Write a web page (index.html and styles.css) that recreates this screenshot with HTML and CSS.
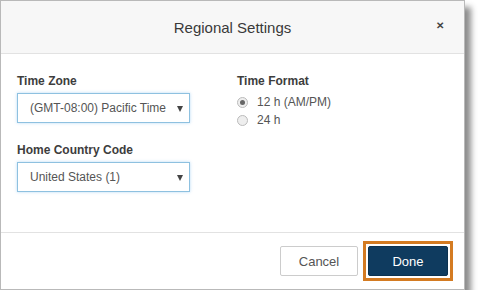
FILE: index.html
```html
<!DOCTYPE html>
<html>
<head>
<meta charset="utf-8">
<link rel="stylesheet" href="styles.css">
</head>
<body>
<div class="dialog">
  <div class="header">
    <span class="title">Regional Settings</span>
    <span class="close">&#x2715;</span>
  </div>
  <div class="content">
    <div class="col left">
      <div class="label">Time Zone</div>
      <div class="select">(GMT-08:00) Pacific Time<span class="arrow"></span></div>
      <div class="label second">Home Country Code</div>
      <div class="select">United States (1)<span class="arrow"></span></div>
    </div>
    <div class="col right">
      <div class="label">Time Format</div>
      <div class="radio-row first"><span class="radio checked"></span>12 h (AM/PM)</div>
      <div class="radio-row"><span class="radio"></span>24 h</div>
    </div>
  </div>
  <div class="footer">
    <button class="btn cancel">Cancel</button>
    <div class="highlight"><button class="btn done">Done</button></div>
  </div>
</div>
</body>
</html>
```
FILE: styles.css
```css
html, body {
  margin: 0;
  padding: 0;
  background: #ffffff;
}
body {
  font-family: "Liberation Sans", Arial, sans-serif;
  color: #333;
}
.dialog {
  width: 463px;
  height: 288px;
  border: 1px solid #b9b9b9;
  background: #fff;
  display: flex;
  flex-direction: column;
  box-shadow: 6px 7px 6px rgba(0,0,0,0.45);
}
.header {
  height: 52px;
  background: #f7f7f7;
  border-bottom: 1px solid #e2e2e2;
  display: flex;
  align-items: center;
  justify-content: center;
  position: relative;
}
.title {
  font-size: 15px;
  color: #3a3a3a;
}
.close {
  position: absolute;
  right: 20px;
  top: 19px;
  font-size: 10px;
  font-weight: bold;
  color: #444;
}
.content {
  flex: 1;
  display: flex;
  padding: 20px 0 0 16px;
  border-bottom: 1px solid #e2e2e2;
}
.col.left {
  width: 220px;
}
.label {
  font-size: 12px;
  font-weight: bold;
  color: #3d3d3d;
  height: 15px;
  line-height: 15px;
}
.label.second {
  margin-top: 20px;
}
.select {
  margin-top: 4px;
  width: 173px;
  height: 30px;
  border: 1px solid #8ec1e0;
  box-shadow: 0 0 3px rgba(102,175,233,0.45);
  box-sizing: border-box;
  display: flex;
  align-items: center;
  padding-left: 12px;
  font-size: 12px;
  color: #555;
  position: relative;
}
.arrow {
  position: absolute;
  right: 6px;
  top: 12px;
  width: 0;
  height: 0;
  border-left: 3px solid transparent;
  border-right: 3px solid transparent;
  border-top: 6px solid #444;
}
.radio-row {
  display: flex;
  align-items: center;
  font-size: 12px;
  color: #555;
  height: 18px;
}
.radio-row.first {
  margin-top: 4px;
}
.radio {
  width: 9px;
  height: 9px;
  border: 1px solid #bbb;
  border-radius: 50%;
  background: #eee;
  margin-right: 9px;
  box-sizing: content-box;
  position: relative;
}
.radio.checked::after {
  content: "";
  position: absolute;
  left: 2px;
  top: 2px;
  width: 5px;
  height: 5px;
  border-radius: 50%;
  background: #666;
}
.footer {
  height: 56px;
  display: flex;
  align-items: center;
  justify-content: flex-end;
  padding-right: 11px;
  gap: 5px;
}
.btn {
  font-family: "Liberation Sans", Arial, sans-serif;
  font-size: 13px;
  height: 30px;
  cursor: pointer;
}
.cancel {
  width: 78px;
  background: #fff;
  border: 1px solid #ccc;
  border-radius: 2px;
  color: #555;
}
.highlight {
  border: 3px solid #d47b22;
  padding: 2px;
  display: flex;
}
.done {
  width: 80px;
  background: #0f3b5f;
  border: 1px solid #0c3250;
  border-radius: 2px;
  color: #fff;
}
```
